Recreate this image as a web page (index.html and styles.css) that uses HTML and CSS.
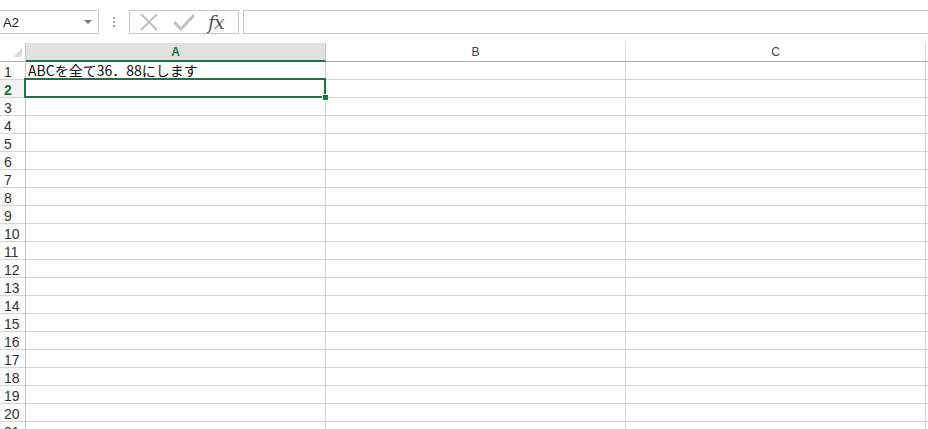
FILE: index.html
```html
<!DOCTYPE html>
<html lang="ja">
    <head>
        <meta charset="UTF-8" />
        <title>Book1 - Excel</title>
        <link rel="stylesheet" href="styles.css">
    </head>
    <body>
        <header class="toolbar">
            <div class="namebox">
                <span>A2</span>
                <span class="arrow"></span>
            </div>
            <div class="grip">
                <i></i><i></i><i></i>
            </div>
            <div class="buttons">
                <svg class="btn" width="20" height="20" viewBox="0 0 20 20">
                    <path d="M2 2 L18 18 M18 2 L2 18" stroke="#c2c2c2" stroke-width="2" fill="none"/>
                </svg>
                <svg class="btn" width="22" height="20" viewBox="0 0 22 20">
                    <path d="M1 10 L8 17 L21 3" stroke="#c2c2c2" stroke-width="3" fill="none"/>
                </svg>
                <span class="fx">fx</span>
            </div>
            <div class="formula"></div>
        </header>
        <section class="sheet" id="sheet">
            <div class="corner"><span class="tri"></span></div>
            <div class="colhead active">A</div>
            <div class="colhead">B</div>
            <div class="colhead">C</div>
            <div class="colhead rest"></div>
        </section>
        <script>
            let sheet = document.getElementById('sheet');
            for (let r = 1; r <= 21; r++) {
                let html = `<div class="rowhead${r == 2 ? ' active' : ''}">${r}</div>`;
                let a = '';
                if (r == 1) a = 'ABCを全て36．88にします';
                if (r == 2) a = '<div class="sel"><span class="handle"></span></div>';
                html += `<div class="cell${r == 2 ? ' current' : ''}">${a}</div>`;
                html += '<div class="cell"></div><div class="cell"></div><div class="cell rest"></div>';
                sheet.insertAdjacentHTML('beforeend', html);
            }
        </script>
    </body>
</html>
```
FILE: styles.css
```css
body {
    margin: 0;
    background: white;
    font-family: "Liberation Sans", Arial, sans-serif;
    overflow: hidden;
}
.toolbar {
    display: flex;
    align-items: flex-start;
    height: 43px;
    padding-top: 10px;
    box-sizing: border-box;
}
.namebox {
    width: 99px;
    height: 24px;
    box-sizing: border-box;
    border: 1px solid #c6c6c6;
    border-left: none;
    display: flex;
    align-items: center;
    justify-content: space-between;
    padding: 0 6px 0 3px;
    font-size: 13px;
    color: #222;
}
.arrow {
    width: 0;
    height: 0;
    border-left: 4px solid transparent;
    border-right: 4px solid transparent;
    border-top: 4px solid #777;
}
.grip {
    width: 30px;
    height: 24px;
    display: flex;
    flex-direction: column;
    align-items: center;
    justify-content: center;
    gap: 2px;
}
.grip i {
    width: 2px;
    height: 2px;
    background: #a0a0a0;
}
.buttons {
    width: 110px;
    height: 24px;
    box-sizing: border-box;
    border: 1px solid #c6c6c6;
    display: flex;
    align-items: center;
    padding-left: 9px;
    gap: 14px;
}
.fx {
    font-family: "DejaVu Serif", "Liberation Serif", serif;
    font-style: italic;
    font-size: 19px;
    color: #555;
    margin-left: -1px;
    letter-spacing: -1px;
    line-height: 20px;
}
.formula {
    flex: 1;
    height: 24px;
    box-sizing: border-box;
    border: 1px solid #c6c6c6;
    border-right: none;
    margin-left: 4px;
}
.sheet {
    display: grid;
    grid-template-columns: 26px 300px 300px 300px 1fr;
    grid-auto-rows: 18px;
    grid-template-rows: 19px;
}
.sheet > div {
    box-sizing: border-box;
}
.corner {
    border-right: 1px solid #c6c6c6;
    border-bottom: 1px solid #ababab;
    position: relative;
}
.tri {
    position: absolute;
    right: 3px;
    bottom: 4px;
    width: 0;
    height: 0;
    border-left: 9px solid transparent;
    border-bottom: 9px solid #dcdcdc;
}
.colhead {
    border-right: 1px solid #d8d8d8;
    border-bottom: 1px solid #ababab;
    text-align: center;
    font-size: 12px;
    line-height: 18px;
    color: #444;
}
.colhead.active {
    background: #e1e1e1;
    color: #217346;
    font-weight: bold;
    border-bottom: 2px solid #217346;
    border-right-color: #c6c6c6;
}
.colhead.rest {
    border-right: none;
}
.rowhead {
    border-right: 1px solid #c6c6c6;
    border-bottom: 1px solid #d4d4d4;
    font-size: 14px;
    line-height: 21px;
    padding-left: 4px;
    color: #333;
    overflow: hidden;
}
.rowhead.active {
    color: #217346;
    font-weight: bold;
    background: #f3f3f3;
}
.cell {
    border-right: 1px solid #d4d4d4;
    border-bottom: 1px solid #d4d4d4;
    font-family: "Noto Sans CJK JP", sans-serif;
    font-size: 14px;
    line-height: 17px;
    padding-left: 2px;
    color: #111;
    white-space: nowrap;
}
.cell.rest {
    border-right: none;
}
.cell.current {
    position: relative;
}
.sel {
    position: absolute;
    left: -2px;
    top: -2px;
    right: -1px;
    bottom: -1px;
    border: 2px solid #217346;
}
.handle {
    position: absolute;
    right: -5px;
    bottom: -5px;
    width: 5px;
    height: 5px;
    background: #217346;
    border: 1px solid white;
}
```
